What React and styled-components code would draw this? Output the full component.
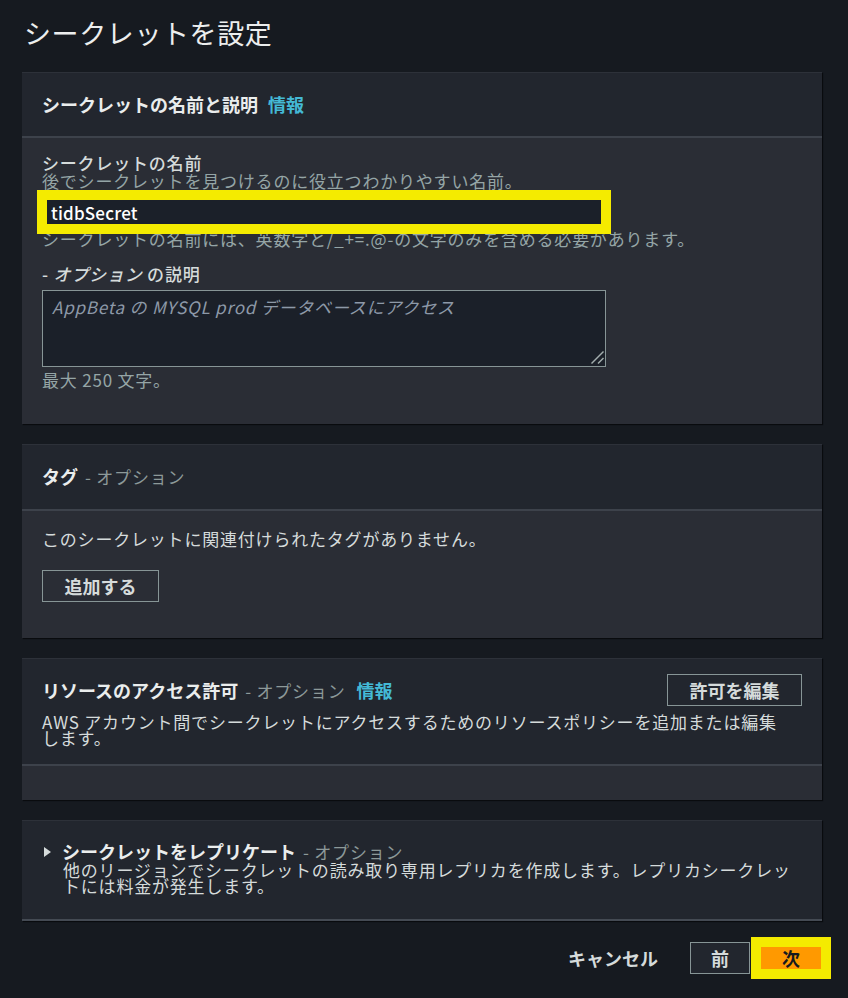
import React from "react";
import styled, { createGlobalStyle, css } from "styled-components";

const GlobalStyle = createGlobalStyle`
  html, body { margin: 0; padding: 0; background: #161a20; }
  body {
    font-family: "Noto Sans CJK JP", "Noto Sans", sans-serif;
    color: #d5dbdb;
  }
  * { box-sizing: border-box; }
`;

const Page = styled.div`
  width: 848px;
  min-height: 998px;
  padding: 16px 26px 0 22px;
  background: #161a20;
`;

const Title = styled.h1`
  margin: 0 0 22px 2px;
  font-size: 27px;
  font-weight: 400;
  line-height: 34px;
  letter-spacing: 0.6px;
  color: #eceeee;
`;

const Stack = styled.div`
  display: flex;
  flex-direction: column;
  gap: 20px;
`;

const Panel = styled.section`
  background: #22262e;
  border-top: 1px solid #2d3139;
  box-shadow: 1px 1px 1px rgba(0, 0, 0, 0.55);
  ${(p) =>
    p.$bottomLine &&
    css`
      border-bottom: 2px solid #444a53;
    `}
`;

const Header = styled.header`
  padding: ${(p) => p.$pad || "19px 20px 20px"};
`;

const HeaderRow = styled.div`
  display: flex;
  align-items: center;
  justify-content: space-between;
`;

const HeaderTitle = styled.h2`
  margin: 0;
  display: flex;
  align-items: baseline;
  font-size: 18px;
  font-weight: 700;
  line-height: ${(p) => p.$lh || "24px"};
  color: #eaeded;
`;

const Optional = styled.span`
  margin-left: 7px;
  font-size: 17px;
  font-weight: 400;
  letter-spacing: 0.8px;
  color: #8d9999;
`;

const Info = styled.a`
  margin-left: ${(p) => p.$ml || "10px"};
  font-size: 18px;
  font-weight: 700;
  color: #44b9d6;
  text-decoration: none;
`;

const Body = styled.div`
  background: #2a2d35;
  border-top: 2px solid #3d424b;
  padding: ${(p) => p.$pad || "0 20px"};
  min-height: ${(p) => p.$minH || "0"};
`;

const Label = styled.div`
  margin-top: ${(p) => p.$mt || "0"};
  font-size: 17px;
  font-weight: 500;
  line-height: 18px;
  letter-spacing: 0.8px;
  color: #d5dbdb;
`;

const Italic = styled.em`
  font-style: italic;
`;

const Text = styled.p`
  margin: ${(p) => p.$m || "0"};
  font-size: 17px;
  font-weight: 400;
  line-height: ${(p) => p.$lh || "18px"};
  letter-spacing: 0.8px;
  color: ${(p) => (p.$muted ? "#95a5a6" : "#d5dbdb")};
`;

const highlight = css`
  position: relative;
  z-index: 1;
  border-color: #f4eb00;
  box-shadow: 0 0 0 5px #f4eb00, inset 0 0 0 4px #f4eb00;
`;

const Input = styled.input`
  display: block;
  width: 564px;
  height: 34px;
  margin-top: 5px;
  padding: 0 8px;
  background: #1b2029;
  border: 1px solid #879596;
  color: #ffffff;
  font-family: inherit;
  font-size: 17px;
  font-weight: 500;
  letter-spacing: 0.2px;
  outline: none;
  ${(p) => p.$highlight && highlight}
`;

const AreaWrap = styled.div`
  position: relative;
  width: 564px;
  margin-top: 7px;
`;

const TextArea = styled.textarea`
  display: block;
  width: 100%;
  height: 77px;
  padding: 6px 9px;
  background: #1b2029;
  border: 1px solid #879596;
  color: #ffffff;
  font-family: inherit;
  font-size: 17px;
  line-height: 20px;
  letter-spacing: 0.8px;
  resize: none;
  outline: none;
  &::placeholder {
    color: #8d99a8;
    font-style: italic;
  }
`;

const Grip = styled.svg`
  position: absolute;
  right: 2px;
  bottom: 3px;
`;

const Button = styled.button`
  height: 32px;
  padding: 0 ${(p) => p.$px || "21px"};
  background: ${(p) => p.$bg || "transparent"};
  border: 1px solid #879596;
  color: #d5dbdb;
  font-family: inherit;
  font-size: 18px;
  font-weight: 700;
  line-height: 1;
  cursor: pointer;
`;

const PrimaryButton = styled(Button)`
  margin-right: -4px;
  background: #ff9900;
  border-color: #ff9900;
  color: #16191f;
  ${(p) => p.$highlight && highlight}
`;

const LinkButton = styled.button`
  padding: 0;
  background: none;
  border: none;
  color: #d5dbdb;
  font-family: inherit;
  font-size: 18px;
  font-weight: 700;
  cursor: pointer;
`;

const Caret = styled.svg`
  flex: none;
  margin: 0 11px 0 2px;
`;

const ExpandRow = styled.div`
  display: flex;
  align-items: center;
`;

const Indented = styled.div`
  margin-left: 21px;
`;

const Footer = styled.footer`
  display: flex;
  justify-content: flex-end;
  align-items: center;
  padding-top: 21px;
`;

const Actions = styled.div`
  display: flex;
  align-items: center;
  gap: 6px;
  margin-left: 32px;
`;

export default function App() {
  return (
    <Page>
      <GlobalStyle />
      <Title>シークレットを設定</Title>
      <Stack>
        <Panel>
          <Header>
            <HeaderTitle>
              シークレットの名前と説明<Info href="#">情報</Info>
            </HeaderTitle>
          </Header>
          <Body $pad="16px 20px 35px">
            <Label>シークレットの名前</Label>
            <Text $muted>後でシークレットを見つけるのに役立つわかりやすい名前。</Text>
            <Input $highlight defaultValue="tidbSecret" readOnly />
            <Text $muted $m="1px 0 0">
              シークレットの名前には、英数字と/_+=.@-の文字のみを含める必要があります。
            </Text>
            <Label $mt="17px">
              - <Italic>オプション</Italic> の説明
            </Label>
            <AreaWrap>
              <TextArea placeholder="AppBeta の MYSQL prod データベースにアクセス" />
              <Grip width="13" height="13" viewBox="0 0 13 13">
                <line x1="0.5" y1="12.5" x2="12.5" y2="0.5" stroke="#a3adae" strokeWidth="1.4" />
                <line x1="7" y1="12.5" x2="12.5" y2="7" stroke="#a3adae" strokeWidth="1.4" />
              </Grip>
            </AreaWrap>
            <Text $muted $m="4px 0 0">最大 250 文字。</Text>
          </Body>
        </Panel>

        <Panel>
          <Header>
            <HeaderTitle>
              タグ<Optional>- オプション</Optional>
            </HeaderTitle>
          </Header>
          <Body $pad="19px 20px 36px">
            <Text>このシークレットに関連付けられたタグがありません。</Text>
            <Button $px="21.5px" style={{ marginTop: 22 }}>追加する</Button>
          </Body>
        </Panel>

        <Panel>
          <Header $pad="15px 20px 18px">
            <HeaderRow>
              <HeaderTitle>
                リソースのアクセス許可<Optional>- オプション</Optional>
                <Info href="#" $ml="11px">情報</Info>
              </HeaderTitle>
              <Button $bg="#22262e" $px="21.5px">許可を編集</Button>
            </HeaderRow>
            <Text $m="8px 0 0" $lh="16px">
              AWS アカウント間でシークレットにアクセスするためのリソースポリシーを追加または編集
              <br />
              します。
            </Text>
          </Header>
          <Body $minH="36px" />
        </Panel>

        <Panel $bottomLine>
          <Header $pad="20px 20px 25px">
            <ExpandRow>
              <Caret width="7" height="10" viewBox="0 0 7 10">
                <polygon points="0,0 7,5 0,10" fill="#d5dbdb" />
              </Caret>
              <HeaderTitle $lh="20px">
                シークレットをレプリケート<Optional>- オプション</Optional>
              </HeaderTitle>
            </ExpandRow>
            <Indented>
              <Text $lh="16px">
                他のリージョンでシークレットの読み取り専用レプリカを作成します。レプリカシークレッ
                <br />
                トには料金が発生します。
              </Text>
            </Indented>
          </Header>
        </Panel>
      </Stack>

      <Footer>
        <LinkButton>キャンセル</LinkButton>
        <Actions>
          <Button $px="20px" $bg="#22262e">前</Button>
          <PrimaryButton $px="25px" $highlight>次</PrimaryButton>
        </Actions>
      </Footer>
    </Page>
  );
}
